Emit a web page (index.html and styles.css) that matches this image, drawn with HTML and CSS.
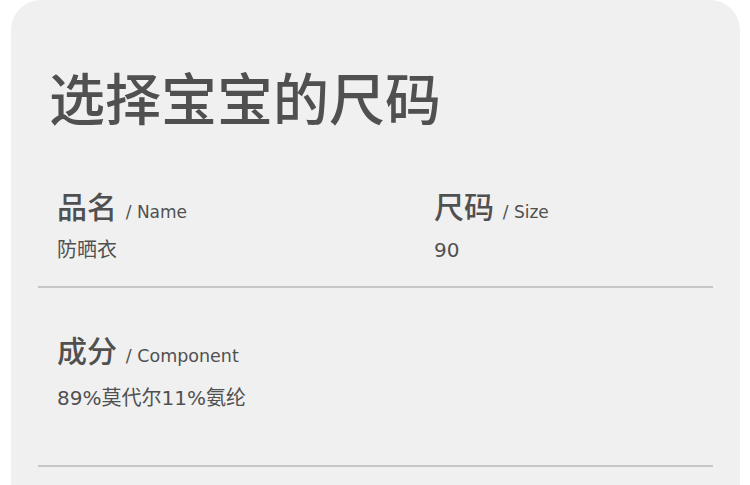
FILE: index.html
```html
<!DOCTYPE html>
<html lang="zh-CN">
  <head>
    <meta charset="UTF-8" />
    <meta name="viewport" content="width=device-width, initial-scale=1.0" />
    <title>选择宝宝的尺码</title>
    <link rel="stylesheet" href="styles.css">
  </head>
  <body>
    <section class="card">
      <h1 class="title">选择宝宝的尺码</h1>

      <div class="row two">
        <div class="field">
          <p class="label">品名 <span class="en">/ Name</span></p>
          <p class="value">防晒衣</p>
        </div>
        <div class="field">
          <p class="label">尺码 <span class="en">/ Size</span></p>
          <p class="value">90</p>
        </div>
      </div>

      <div class="row tall">
        <div class="field">
          <p class="label">成分 <span class="en">/ Component</span></p>
          <p class="value">89%莫代尔11%氨纶</p>
        </div>
      </div>
    </section>
  </body>
</html>
```

FILE: styles.css
```css
body {
  margin: 0;
  padding: 0;
  background-color: #fff;
  font-family: "Noto Sans CJK SC", "Open Sans", sans-serif;
  color: #505050;
}

.card {
  background-color: #f0f0f0;
  margin: 0 10px 0 11px;
  height: 485px;
  border-radius: 30px 30px 0 0;
  padding-top: 64px;
  box-sizing: border-box;
}

.title {
  margin: 0 0 0 38px;
  font-size: 56px;
  font-weight: 500;
  line-height: 64px;
}

.row {
  margin: 0 27px;
  padding: 59px 0 22px 19px;
  border-bottom: 2px solid #c6c6c6;
}

.row.two {
  display: grid;
  grid-template-columns: 377px 1fr;
}

.row.tall {
  padding-top: 43px;
  padding-bottom: 53px;
}

.label {
  margin: 0;
  font-size: 30px;
  line-height: 36px;
  font-weight: 500;
}

.label .en {
  font-family: "DejaVu Sans", sans-serif;
  font-size: 17px;
  font-weight: 400;
  margin-left: 2px;
}

.row.tall .label .en {
  font-size: 17.5px;
}

.value {
  margin: 6px 0 0;
  font-family: "DejaVu Sans", "Noto Sans CJK SC", sans-serif;
  font-size: 20px;
  line-height: 28px;
}

.row.tall .value {
  margin-top: 10px;
}
```
